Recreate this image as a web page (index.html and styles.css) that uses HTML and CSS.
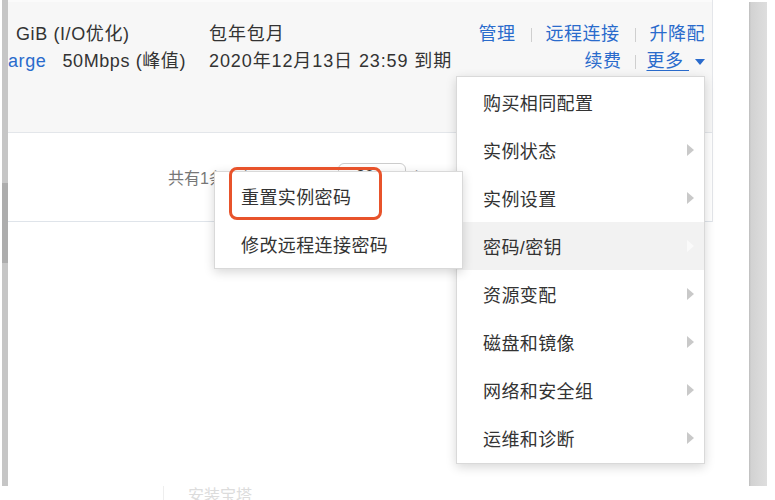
FILE: index.html
```html
<!DOCTYPE html>
<html lang="zh-CN">
<head>
<meta charset="utf-8">
<title>实例列表</title>
<link rel="stylesheet" href="styles.css">
</head>
<body>
<div class="page">
  <div class="lstrip"><div class="lbar"><div class="lthumb"></div></div></div>
  <div class="main">
    <div class="row">
      <div class="col c1">
        <div class="ln">GiB (I/O优化)</div>
        <div class="ln"><span class="link">arge</span><span class="bw">50Mbps (峰值)</span></div>
      </div>
      <div class="col c2">
        <div class="ln">包年包月</div>
        <div class="ln">2020年12月13日 23:59 到期</div>
      </div>
      <div class="col c3">
        <div class="ln acts"><span class="link">管理</span><i class="sep"></i><span class="link">远程连接</span><i class="sep"></i><span class="link">升降配</span></div>
        <div class="ln acts"><span class="link">续费</span><i class="sep sep2"></i><span class="link more">更多&nbsp;</span><i class="caret"></i></div>
      </div>
    </div>
    <div class="pager">
      <span class="ptext">共有1条，每页显示：</span>
      <span class="psel">20 <i class="updown">↕</i></span>
      <span class="ptext">条</span>
      <span class="pbtns"></span>
    </div>
  </div>
  <div class="gap"></div>
  <div class="rbar"></div>
</div>
<div class="foot"><i class="fline"></i><span class="ftext">安装宝塔</span></div>

<div class="menu">
  <div class="mi">购买相同配置</div>
  <div class="mi sub">实例状态<i class="arr"></i></div>
  <div class="mi sub">实例设置<i class="arr"></i></div>
  <div class="mi sub on">密码/密钥<i class="arr"></i></div>
  <div class="mi sub">资源变配<i class="arr"></i></div>
  <div class="mi sub">磁盘和镜像<i class="arr"></i></div>
  <div class="mi sub">网络和安全组<i class="arr"></i></div>
  <div class="mi sub">运维和诊断<i class="arr"></i></div>
</div>
<div class="submenu">
  <div class="mi">重置实例密码</div>
  <div class="mi">修改远程连接密码</div>
</div>
<div class="mark"></div>
</body>
</html>
```
FILE: styles.css
```css
* { box-sizing: border-box; }
html, body { margin: 0; padding: 0; }
body {
  width: 775px;
  height: 500px;
  overflow: hidden;
  background: #fff;
  font-family: "Liberation Sans", "Noto Sans CJK SC", sans-serif;
  color: #333;
  position: relative;
}
i { font-style: normal; }
.page { display: flex; height: 486px; }
.lstrip { flex: none; width: 8px; height: 486px; padding-left: 2px; }
.lbar { width: 6px; height: 486px; background: #c6c6c6; padding-top: 183px; }
.lthumb { height: 80px; background: #adadad; }
.main {
  flex: none;
  width: 705px;
  display: flex;
  flex-direction: column;
  align-self: flex-start;
  border-right: 1px solid #e4e6ea;
}
.row {
  height: 133px;
  background: #f7f7f7;
  border-top: 2px solid #fbfbfb;
  border-bottom: 1px solid #e3e6ea;
  display: flex;
  padding-top: 19px;
  font-size: 18px;
  line-height: 27px;
  letter-spacing: 0.6px;
}
.c1 { width: 201px; white-space: nowrap; overflow: hidden; }
.c1 .ln:first-child { padding-left: 8px; }
.bw { margin-left: 16px; }
.c2 { flex: 1; white-space: nowrap; letter-spacing: 0.9px; }
.c3 { padding-right: 7px; display: flex; flex-direction: column; align-items: flex-end; letter-spacing: 0.5px; }
.acts { display: flex; align-items: center; height: 27px; }
.link { color: #2a6bcc; }
.sep { width: 1px; height: 14px; background: #cfcfcf; margin: 0 14px 0 15px; }
.sep2 { margin: 0 10px 0 14px; }
.more { text-decoration: underline; text-underline-offset: 3px; }
.caret {
  width: 0; height: 0;
  border-top: 6px solid #2a6bcc;
  border-left: 5px solid transparent;
  border-right: 5px solid transparent;
  margin-left: 6px;
}
.pager {
  height: 89px;
  border-bottom: 1px solid #dfe4ea;
  display: flex;
  align-items: center;
  padding-left: 160px;
  font-size: 16px;
  color: #777;
}
.psel {
  margin-left: 17px;
  width: 68px; height: 28px;
  border: 1px solid #ccc;
  border-radius: 6px;
  display: flex; align-items: center; justify-content: center;
  color: #333;
}
.updown { font-size: 12px; margin-left: 8px; }
.ptext + .psel + .ptext { margin-left: 4px; }
.pbtns {
  margin-left: 30px;
  width: 120px; height: 46px;
  border: 1px solid #dcdcdc;
}
.gap { flex: none; width: 36px; }
.rbar {
  flex: none;
  width: 18px;
  margin-top: 2px;
  background: linear-gradient(to right, #bdbdbd 0, #d2d2d2 2px, #d9d9d9 60%, #dedede 100%);
}
.foot { display: flex; align-items: flex-start; height: 14px; padding-left: 163px; }
.fline { width: 1px; height: 14px; background: #eee; }
.ftext { margin-left: 24px; font-size: 16px; line-height: 18px; color: #dcdcdc; margin-top: 1px; }

.menu, .submenu {
  position: absolute;
  width: 249px;
  background: #fff;
  border: 1px solid #d9d9d9;
  box-shadow: 0 3px 10px rgba(0,0,0,0.16);
  font-size: 18px;
  letter-spacing: 0.4px;
  color: #333;
}
.menu { left: 456px; top: 76px; padding: 1px 0; }
.submenu { left: 214px; top: 171px; padding: 0; z-index: 2; }
.mi {
  height: 48px;
  display: flex;
  align-items: center;
  justify-content: space-between;
  padding: 0 10px 0 26px;
}
.mi.on { background: #f2f2f2; }
.arr {
  width: 0; height: 0;
  border-left: 7px solid #c9c9c9;
  border-top: 6px solid transparent;
  border-bottom: 6px solid transparent;
}
.on .arr { border-left-color: #fafafa; }
.mark {
  position: absolute;
  left: 229px; top: 167px;
  width: 153px; height: 53px;
  border: 3px solid #e8532b;
  border-radius: 8px;
  z-index: 3;
}
```
